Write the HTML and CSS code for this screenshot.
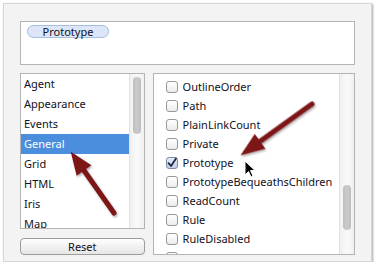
FILE: index.html
```html
<!DOCTYPE html>
<html lang="en">
<head>
    <meta charset="UTF-8">
    <title>Attribute browser</title>
    <link rel="stylesheet" href="styles.css">
</head>
<body>
    <div class="panel">
        <div class="tags">
            <span class="pill">Prototype</span>
        </div>

        <div class="lower">
            <div class="side">
                <div class="list cats">
                    <div class="items">
                        <div class="row">Agent</div>
                        <div class="row">Appearance</div>
                        <div class="row">Events</div>
                        <div class="row selected">General</div>
                        <div class="row">Grid</div>
                        <div class="row">HTML</div>
                        <div class="row">Iris</div>
                        <div class="row">Map</div>
                    </div>
                    <div class="track"><div class="thumb thumb-cats"></div></div>
                </div>
                <button class="reset">Reset</button>
            </div>

            <div class="list attrs">
                <div class="items scrolled">
                    <div class="check-row"><span class="box"></span>OutlineColor</div>
                    <div class="check-row"><span class="box"></span>OutlineOrder</div>
                    <div class="check-row"><span class="box"></span>Path</div>
                    <div class="check-row"><span class="box"></span>PlainLinkCount</div>
                    <div class="check-row"><span class="box"></span>Private</div>
                    <div class="check-row"><span class="box checked"><svg width="12" height="12" viewBox="0 0 12 12"><path d="M2.5 6.2 L5 9 L10 1.5" fill="none" stroke="#1d2a4a" stroke-width="1.8" stroke-linecap="round" stroke-linejoin="round"/></svg></span>Prototype</div>
                    <div class="check-row"><span class="box"></span>PrototypeBequeathsChildren</div>
                    <div class="check-row"><span class="box"></span>ReadCount</div>
                    <div class="check-row"><span class="box"></span>Rule</div>
                    <div class="check-row"><span class="box"></span>RuleDisabled</div>
                    <div class="check-row"><span class="box"></span>SearchableText</div>
                </div>
                <div class="track"><div class="thumb thumb-attrs"></div></div>
            </div>
        </div>
    </div>

    <!-- annotation arrows and cursor drawn over the window -->
    <svg class="overlay" width="378" height="266" viewBox="0 0 378 266">
        <defs>
            <filter id="shadow" x="-20%" y="-20%" width="140%" height="140%">
                <feDropShadow dx="1" dy="1.5" stdDeviation="1.2" flood-color="#000" flood-opacity="0.35"/>
            </filter>
        </defs>
        <g fill="#7d1214" stroke="#7d1214" filter="url(#shadow)">
            <g transform="translate(114 213) rotate(-125.2)">
                <line x1="0" y1="0" x2="56" y2="0" stroke-width="5" stroke-linecap="round"/>
                <polygon points="52,-9 75,0 52,9" stroke="none"/>
            </g>
            <g transform="translate(312 104) rotate(144.3)">
                <line x1="0" y1="0" x2="68" y2="0" stroke-width="5" stroke-linecap="round"/>
                <polygon points="64,-9 88,0 64,9" stroke="none"/>
            </g>
        </g>
        <path d="M245 161 L245 175 L248.5 171.5 L251 177 L253 176 L250.5 170.5 L255 170.5 Z" fill="#000" stroke="#fff" stroke-width="1" stroke-linejoin="round"/>
    </svg>
</body>
</html>
```

FILE: styles.css
```css
body {
    margin: 0;
    background: #fff;
    font-family: 'Noto Sans', 'DejaVu Sans', sans-serif;
    font-size: 11px;
    color: #10101c;
}
.panel {
    width: 369px;
    height: 259px;
    margin: 3px 0 0 3px;
    box-sizing: border-box;
    padding: 17px 16px 0 16px;
    background-color: #f3f3f3;
    border: 1px solid #d6d6d6;
    box-shadow: 1px 1px 2px rgba(0,0,0,0.35);
}
.tags {
    height: 44px;
    box-sizing: border-box;
    padding: 2px 6px;
    background: #fff;
    border: 1px solid #b4b4b4;
}
.pill {
    display: inline-block;
    width: 82px;
    height: 13px;
    box-sizing: border-box;
    line-height: 11px;
    text-align: center;
    background-color: #dce6f8;
    border: 1px solid #a6bde2;
    border-radius: 7px;
}
.lower {
    display: flex;
    gap: 8px;
    margin-top: 8px;
}
.side {
    width: 125px;
    display: flex;
    flex-direction: column;
}
.list {
    display: flex;
    box-sizing: border-box;
    background: #fff;
    border: 1px solid #b4b4b4;
    overflow: hidden;
}
.cats {
    height: 156px;
}
.attrs {
    width: 203px;
    height: 182px;
}
.items {
    flex: 1;
    overflow: hidden;
}
.row {
    height: 20px;
    line-height: 20px;
    padding-left: 3px;
}
.row.selected {
    background-color: #4c8ede;
    color: #fff;
}
.track {
    width: 14px;
    flex-shrink: 0;
    position: relative;
    border-left: 1px solid #e2e2e2;
    background: linear-gradient(to right, #f0f0f0, #fafafa 50%, #f0f0f0);
}
.thumb {
    position: absolute;
    left: 3px;
    width: 8px;
    border-radius: 4px;
    background: linear-gradient(to right, #bdbdbd, #cbcbcb 50%, #bdbdbd);
}
.thumb-cats {
    top: 3px;
    height: 57px;
}
.thumb-attrs {
    top: 111px;
    height: 45px;
}
.reset {
    margin-top: 9px;
    height: 17px;
    padding: 0;
    font-family: inherit;
    font-size: 11px;
    color: #10101c;
    background: linear-gradient(#ffffff, #f1f1f1 50%, #e6e6e6);
    border: 1px solid #9c9c9c;
    border-radius: 4px;
}
.scrolled {
    margin-top: -16px;
    padding-left: 12px;
}
.check-row {
    display: flex;
    align-items: center;
    height: 19px;
    white-space: nowrap;
}
.box {
    width: 12px;
    height: 12px;
    box-sizing: border-box;
    margin-right: 5px;
    flex-shrink: 0;
    border: 1px solid #989898;
    border-radius: 3px;
    background: linear-gradient(#ffffff, #ececec);
}
.box.checked {
    background: linear-gradient(#e4ebf6, #c3cfe2);
    border-color: #7f8aa0;
}
.box svg {
    display: block;
    margin: -1px 0 0 -1px;
}
.overlay {
    position: absolute;
    left: 0;
    top: 0;
    pointer-events: none;
}
```
